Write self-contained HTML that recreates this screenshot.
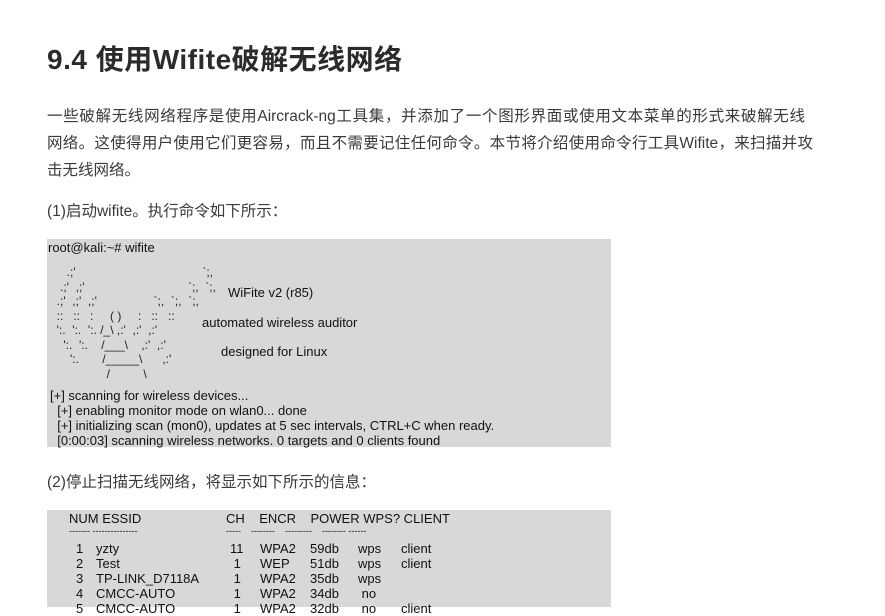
<!DOCTYPE html>
<html><head><meta charset="utf-8"><style>
body{margin:0;width:885px;height:607px;background:#fff;overflow:hidden;position:relative;font-family:"Liberation Sans","Noto Sans CJK SC",sans-serif;color:#333}
h1{position:absolute;left:47px;top:38px;margin:0;font-size:28px;font-weight:bold;color:#2b2b2b;letter-spacing:0.5px}
.p{position:absolute;left:47px;font-size:15.5px;color:#3a3a3a;line-height:20px}
.j{text-align:justify;text-align-last:justify;white-space:nowrap}
.box{position:absolute;left:47px;width:564px;background:#d8d8d8}
.t{position:absolute;font-size:13px;color:#111;white-space:pre;line-height:15px;font-family:"Liberation Sans",sans-serif}
</style></head><body>
<h1>9.4 使用Wifite破解无线网络</h1>
<div class="p j" style="top:107px;width:758px">一些破解无线网络程序是使用Aircrack-ng工具集，并添加了一个图形界面或使用文本菜单的形式来破解无线</div>
<div class="p j" style="top:134px;width:766px">网络。这使得用户使用它们更容易，而且不需要记住任何命令。本节将介绍使用命令行工具Wifite，来扫描并攻</div>
<div class="p" style="top:161px">击无线网络。</div>
<div class="p" style="top:202px">(1)启动wifite。执行命令如下所示：</div>
<div class="box" style="top:239px;height:208px">
<div class="t" style="left:1px;top:1px">root@kali:~# wifite</div>
<div class="t" style="left:3px;top:26px;font-size:12px;line-height:14.5px;color:#222">     .;'                                      `;,
   .;'  ,;'                               `;,  `;,
  .;'  ,;'  ,;'                 `;,  `;,  `;,
  ::   ::   :     ( )     :   ::   ::
  ':.  ':.  ':. /_\ ,:'  ,:'  ,:'
    ':.  ':.    /___\    ,:'  ,:'
      ':.       /_____\      ,:'
                 /          \</div>
<div class="t" style="left:181px;top:46px">WiFite v2 (r85)</div>
<div class="t" style="left:155px;top:76px">automated wireless auditor</div>
<div class="t" style="left:174px;top:105px">designed for Linux</div>
<div class="t" style="left:3px;top:149px">[+] scanning for wireless devices...
  [+] enabling monitor mode on wlan0... done
  [+] initializing scan (mon0), updates at 5 sec intervals, CTRL+C when ready.
  [0:00:03] scanning wireless networks. 0 targets and 0 clients found</div>
</div>
<div class="p" style="top:473px">(2)停止扫描无线网络，将显示如下所示的信息：</div>
<div class="box" style="top:510px;height:97px">
<div class="t" style="left:22px;top:1px">NUM ESSID</div>
<div class="t" style="left:179px;top:1px">CH    ENCR    POWER WPS? CLIENT</div>
<div class="t" style="left:22px;top:14px;font-size:9px">------- ---------------</div>
<div class="t" style="left:179px;top:14px;font-size:9px">-----    --------    ---------    -------- ------</div>
<div class="t" style="left:29px;top:31px">1
2
3
4
5</div>
<div class="t" style="left:49px;top:31px">yzty
Test
TP-LINK_D7118A
CMCC-AUTO
CMCC-AUTO</div>
<div class="t" style="left:183px;top:31px">11
 1
 1
 1
 1</div>
<div class="t" style="left:213px;top:31px">WPA2
WEP
WPA2
WPA2
WPA2</div>
<div class="t" style="left:263px;top:31px">59db
51db
35db
34db
32db</div>
<div class="t" style="left:311px;top:31px">wps
wps
wps
 no
 no</div>
<div class="t" style="left:354px;top:31px">client
client


client</div>
</div>
</body></html>
